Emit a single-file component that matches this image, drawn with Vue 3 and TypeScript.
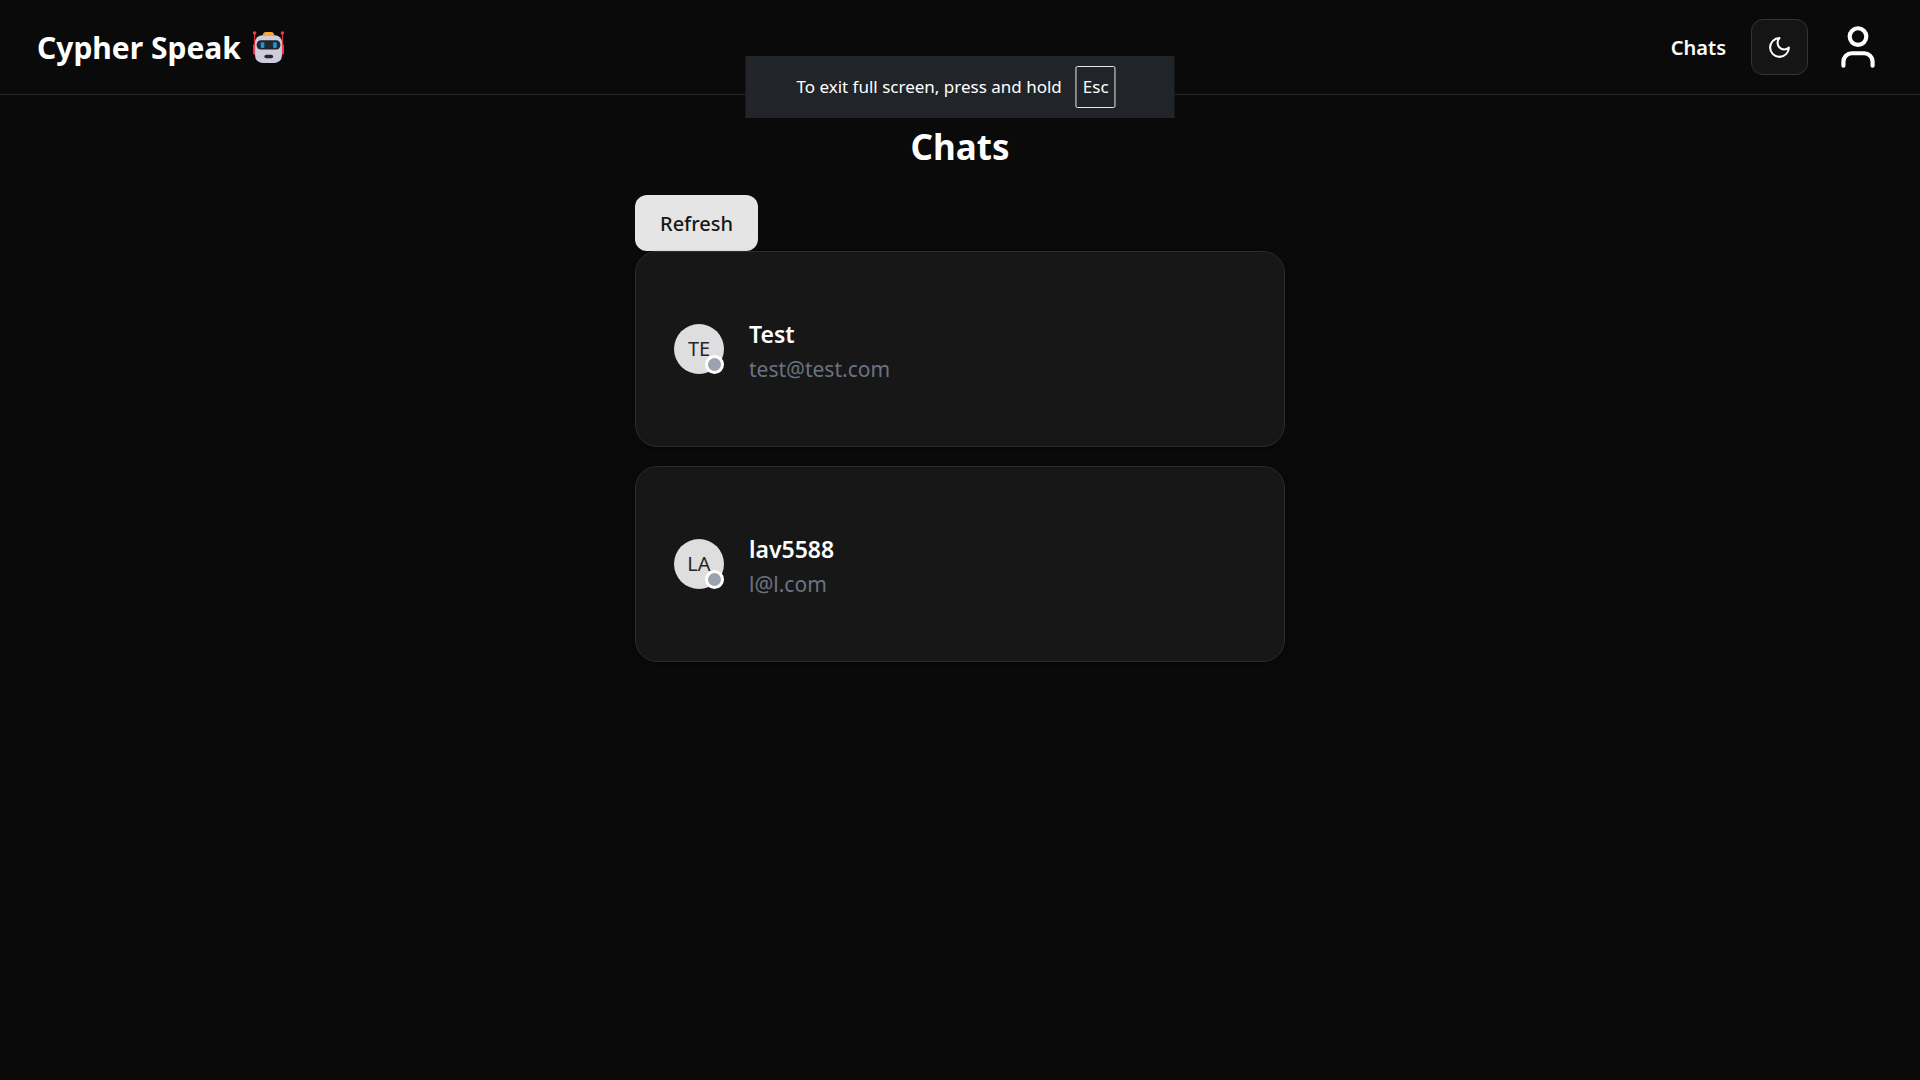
<script setup lang="ts">
import { ref } from 'vue'

interface Contact {
  name: string
  email: string
  initials: string
}

const contacts = ref<Contact[]>([
  { name: 'Test', email: 'test@test.com', initials: 'TE' },
  { name: 'lav5588', email: 'l@l.com', initials: 'LA' },
])

function refresh(): void {
  contacts.value = [...contacts.value]
}
</script>

<template>
  <div class="page">
    <header class="topbar">
      <a class="brand" href="#">
        <span class="brand-name">Cypher Speak</span>
        <svg class="robot" viewBox="0 0 32 32" aria-hidden="true">
          <path d="M2.5 3v12M29.5 3v12" stroke="#d3343f" stroke-width="1.2" />
          <circle cx="2.5" cy="2" r="1.7" fill="#ee3a45" />
          <circle cx="29.5" cy="2" r="1.7" fill="#ee3a45" />
          <rect x="1" y="12" width="5" height="11" rx="2.5" fill="#f03b4c" />
          <rect x="26" y="12" width="5" height="11" rx="2.5" fill="#f03b4c" />
          <rect x="3" y="4" width="26" height="27" rx="7" fill="#d0cbdc" />
          <path d="M10.500 4.500q0-3.500 3-3.500h5q3 0 3 3.500z" fill="#f4aa35" />
          <rect x="4.500" y="9" width="23" height="9" rx="4" fill="#25262d" />
          <rect x="8.500" y="11" width="3.500" height="5.500" rx="1" fill="#1599d6" />
          <rect x="20.500" y="11" width="3.500" height="5.500" rx="1" fill="#1599d6" />
          <rect x="12" y="23" width="8.500" height="3.500" rx="1.700" fill="#25262d" />
        </svg>
      </a>
      <nav class="nav">
        <a class="nav-link" href="#chats">Chats</a>
        <button class="theme" type="button" aria-label="Toggle theme">
          <svg viewBox="0 0 24 24" aria-hidden="true">
            <path d="M12 3a6 6 0 0 0 9 9 9 9 0 1 1-9-9Z" />
          </svg>
        </button>
        <button class="profile" type="button" aria-label="Profile">
          <svg viewBox="0 0 24 24" aria-hidden="true">
            <path d="M19 21v-2a4 4 0 0 0-4-4H9a4 4 0 0 0-4 4v2" />
            <circle cx="12" cy="7" r="4" />
          </svg>
        </button>
      </nav>
    </header>

    <main class="content">
      <h1 class="heading">Chats</h1>
      <button class="refresh" type="button" @click="refresh">Refresh</button>
      <ul class="list">
        <li v-for="contact in contacts" :key="contact.email" class="card">
          <div class="avatar">
            {{ contact.initials }}
            <span class="status"></span>
          </div>
          <div class="info">
            <h2 class="name">{{ contact.name }}</h2>
            <p class="email">{{ contact.email }}</p>
          </div>
        </li>
      </ul>
    </main>

    <div class="notice" role="status">
      <span>To exit full screen, press and hold</span>
      <kbd class="key">Esc</kbd>
    </div>
  </div>
</template>

<style>
body {
  background: #0a0a0a;
}
</style>

<style scoped>
.page {
  min-height: 100vh;
  background: #0a0a0a;
  color: #ffffff;
  font-family: "Segoe UI", "Noto Sans", "Open Sans", sans-serif;
  font-size: 20px;
  line-height: 32px;
}

.page * {
  box-sizing: border-box;
}

button {
  font: inherit;
  color: inherit;
  cursor: pointer;
}

a {
  color: inherit;
  text-decoration: none;
}

.topbar {
  display: flex;
  align-items: center;
  justify-content: space-between;
  padding: 19px 37px;
  border-bottom: 1px solid #262626;
}

.brand {
  display: flex;
  align-items: center;
  gap: 11px;
  font-size: 30px;
  font-weight: 700;
}

.brand-name,
.nav-link {
  padding-top: 2px;
}

.robot {
  width: 33px;
  height: 33px;
}

.nav {
  display: flex;
  align-items: center;
  gap: 25px;
}

.nav-link {
  font-weight: 600;
}

.theme {
  display: grid;
  place-items: center;
  width: 57px;
  height: 56px;
  padding: 0;
  border: 1px solid #343434;
  border-radius: 12px;
  background: #151515;
}

.theme svg {
  width: 25px;
  height: 25px;
}

.profile {
  display: block;
  width: 50px;
  height: 50px;
  padding: 0;
  border: 0;
  background: none;
}

.profile svg {
  display: block;
  width: 50px;
  height: 50px;
}

.nav svg {
  fill: none;
  stroke: #ffffff;
  stroke-width: 2;
  stroke-linecap: round;
  stroke-linejoin: round;
}

.content {
  width: 100%;
  max-width: 650px;
  margin: 0 auto;
  padding: 26px 0;
}

.heading {
  margin: 0 0 23px;
  font-size: 35px;
  font-weight: 700;
  line-height: 51px;
  text-align: center;
}

.refresh {
  display: block;
  height: 56px;
  padding: 2px 25px 0;
  border: 0;
  border-radius: 12px;
  background: #e5e5e5;
  color: #171717;
  font-weight: 500;
}

.list {
  display: flex;
  flex-direction: column;
  gap: 19px;
  margin: 0;
  padding: 0;
  list-style: none;
}

.card {
  display: flex;
  align-items: center;
  gap: 25px;
  padding: 59px 38px;
  border: 1px solid #2c2c2c;
  border-radius: 22px;
  background: #171717;
  box-shadow: 0 2px 4px rgba(0, 0, 0, 0.3);
}

.avatar {
  position: relative;
  display: grid;
  place-items: center;
  width: 50px;
  height: 50px;
  border-radius: 50%;
  background: #dedede;
  color: #262626;
}

.status {
  position: absolute;
  right: 0;
  bottom: 0;
  width: 19px;
  height: 19px;
  border: 3px solid #ffffff;
  border-radius: 50%;
  background: #9ca3af;
}

.info {
  padding-top: 6px;
}

.name,
.email {
  margin: 0;
  line-height: 35px;
}

.name {
  font-size: 23px;
  font-weight: 600;
}

.email {
  font-size: 21px;
  color: #6b7280;
}

.notice {
  position: absolute;
  top: 56px;
  left: 50%;
  display: flex;
  align-items: center;
  gap: 14px;
  padding: 10px 59px 10px 51px;
  background: #212529;
  color: #ffffff;
  font-size: 17px;
  white-space: nowrap;
  transform: translateX(-50%);
}

.key {
  padding: 5px 6px;
  border: 1px solid #e6e6e6;
  border-radius: 2px;
  font: inherit;
  line-height: 30px;
}
</style>
